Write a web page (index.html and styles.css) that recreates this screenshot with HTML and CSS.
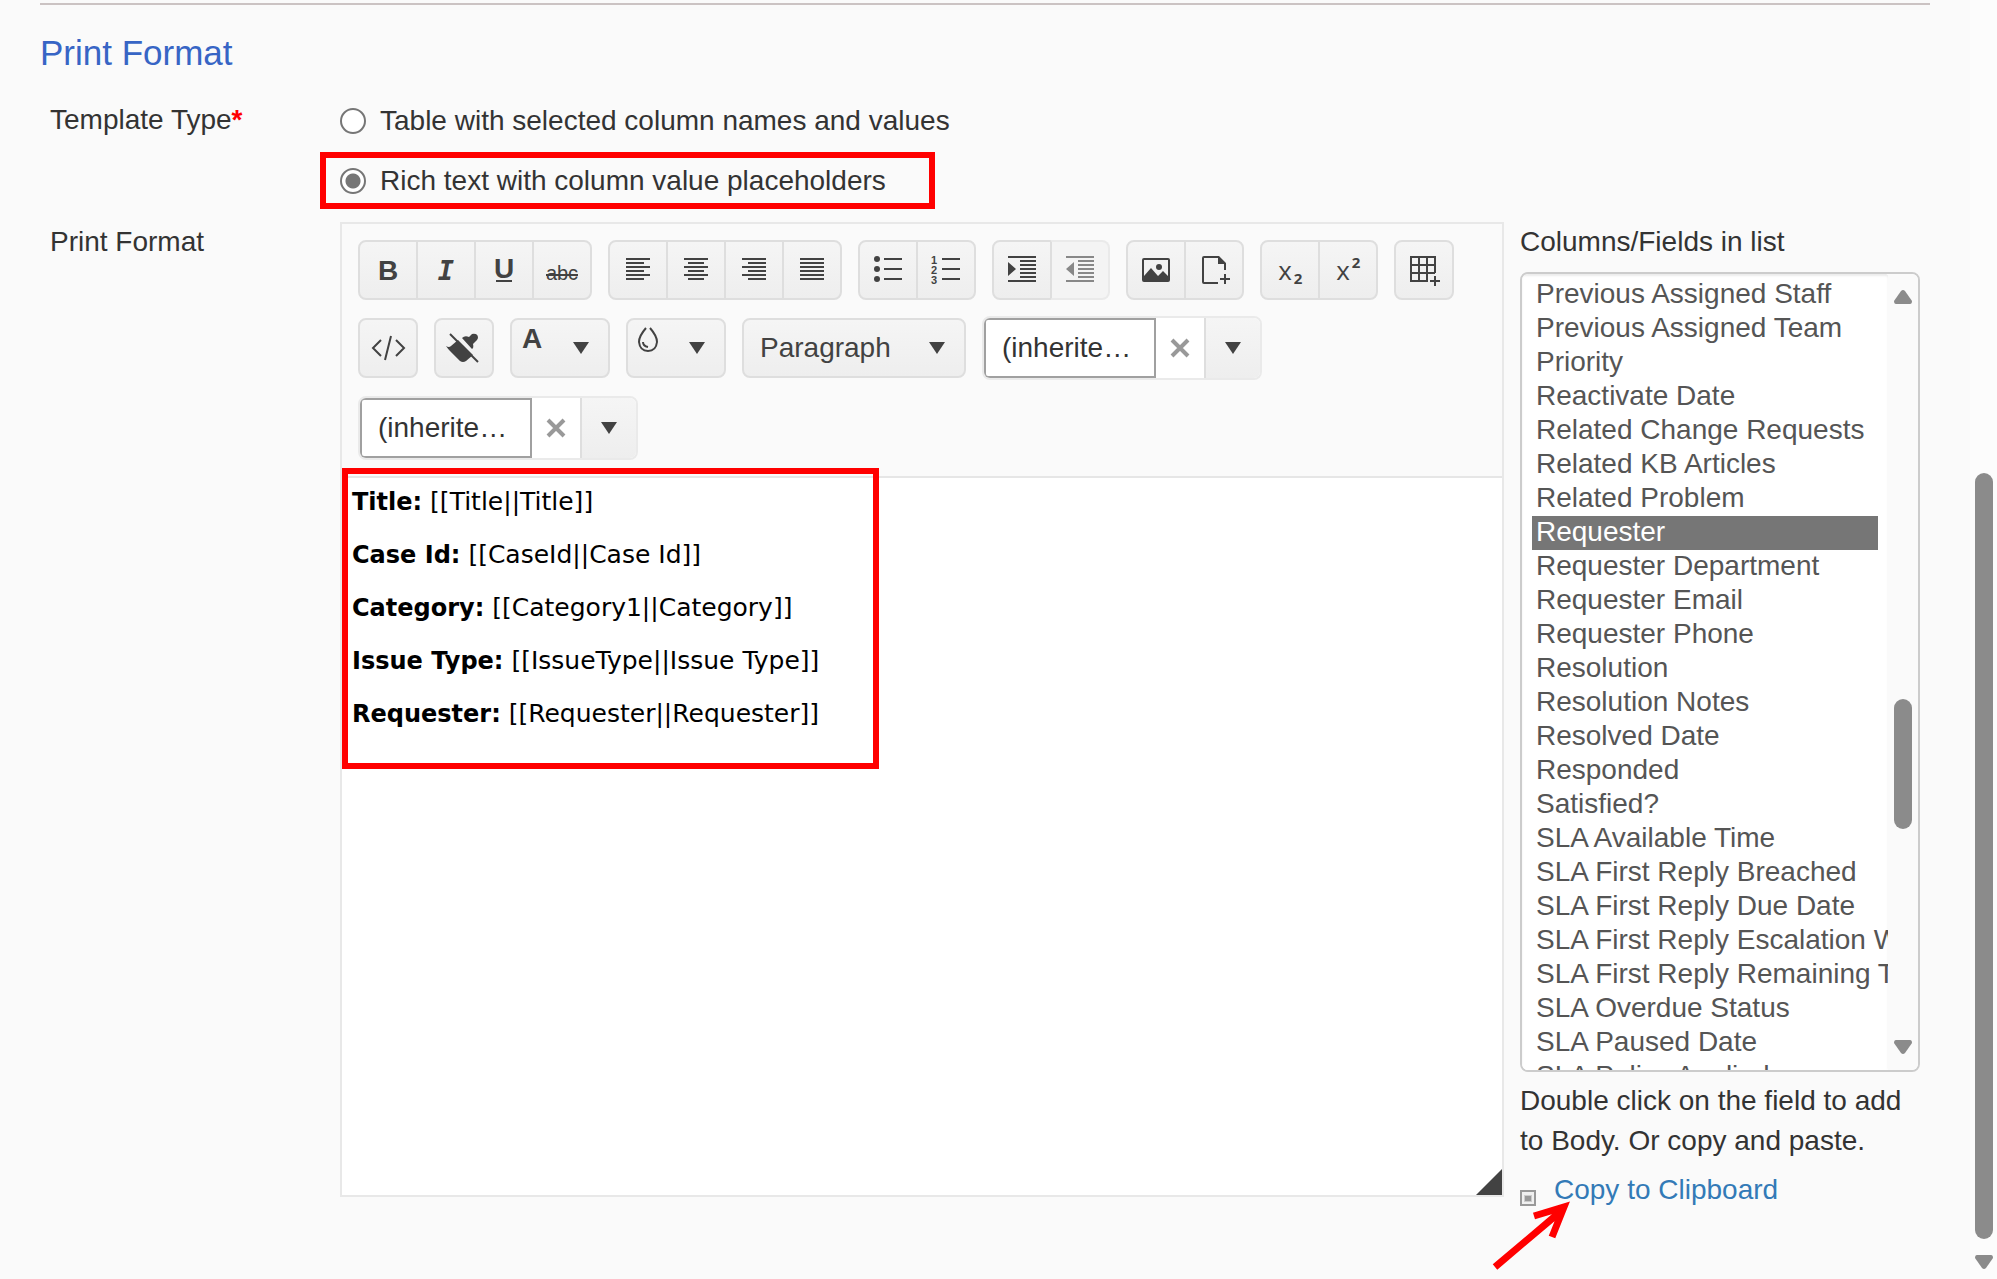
FILE: index.html
```html
<!DOCTYPE html>
<html lang="en">
<head>
<meta charset="utf-8">
<title>Print Format</title>
<link rel="stylesheet" href="styles.css">
</head>
<body>
<div class="page">
<main class="main">
  <hr class="divider">
  <h2 class="heading">Print Format</h2>
  <form class="form">
    <div class="row" role="radiogroup" aria-labelledby="type-label">
      <div class="label" id="type-label">Template Type<span class="required">*</span></div>
      <div class="options">
        <label class="option"><input type="radio" name="type">Table with selected column names and values</label>
        <label class="option marked"><input type="radio" name="type" checked>Rich text with column value placeholders</label>
      </div>
    </div>
    <div class="row">
      <div class="label" id="format-label">Print Format</div>
      <section class="editor" aria-labelledby="format-label">
        <div class="toolbar" role="toolbar" aria-label="Formatting">
          <div class="group">
            <button type="button" class="tool" aria-label="Bold"><svg viewBox="2 2 56 56"><text class="glyph-bold" x="30" y="40">B</text></svg></button>
            <button type="button" class="tool" aria-label="Italic"><svg viewBox="2 2 56 56"><text class="glyph-italic" x="30" y="40">I</text></svg></button>
            <button type="button" class="tool" aria-label="Underline"><svg viewBox="2 2 56 56"><text class="glyph-bold" x="30" y="38">U</text><path d="M22 40h16v2H22z"/></svg></button>
            <button type="button" class="tool" aria-label="Strikethrough"><svg viewBox="2 2 56 56"><text class="glyph-strike" x="30" y="40">abc</text><path d="M14 34h32v2H14z"/></svg></button>
          </div>
          <div class="group">
            <button type="button" class="tool" aria-label="Align left"><svg viewBox="2 2 56 56"><path d="M18 18h24v2H18zM18 22h18v2H18zM18 26h24v2H18zM18 30h18v2H18zM18 34h24v2H18zM18 38h18v2H18z"/></svg></button>
            <button type="button" class="tool" aria-label="Align center"><svg viewBox="2 2 56 56"><path d="M18 18h24v2H18zM22 22h16v2H22zM18 26h24v2H18zM22 30h16v2H22zM18 34h24v2H18zM22 38h16v2H22z"/></svg></button>
            <button type="button" class="tool" aria-label="Align right"><svg viewBox="2 2 56 56"><path d="M18 18h24v2H18zM24 22h18v2H24zM18 26h24v2H18zM24 30h18v2H24zM18 34h24v2H18zM24 38h18v2H24z"/></svg></button>
            <button type="button" class="tool" aria-label="Justify"><svg viewBox="2 2 56 56"><path d="M18 18h24v2H18zM18 22h24v2H18zM18 26h24v2H18zM18 30h24v2H18zM18 34h24v2H18zM18 38h24v2H18z"/></svg></button>
          </div>
          <div class="group">
            <button type="button" class="tool" aria-label="Bulleted list"><svg viewBox="2 2 56 56"><circle cx="19" cy="19" r="3"/><circle cx="19" cy="29" r="3"/><circle cx="19" cy="39" r="3"/><path d="M26 18h18v2H26zM26 28h18v2H26zM26 38h18v2H26z"/></svg></button>
            <button type="button" class="tool" aria-label="Numbered list"><svg viewBox="2 2 56 56"><text class="glyph-num" x="18" y="24">1</text><text class="glyph-num" x="18" y="34">2</text><text class="glyph-num" x="18" y="44">3</text><path d="M26 18h18v2H26zM26 28h18v2H26zM26 38h18v2H26z"/></svg></button>
          </div>
          <div class="group">
            <button type="button" class="tool" aria-label="Indent"><svg viewBox="2 2 56 56"><path d="M16 16h28v2H16zM28 20h16v2H28zM28 24h16v2H28zM28 28h16v2H28zM28 32h16v2H28zM28 36h16v2H28zM16 40h28v2H16zM16 22l8 7-8 7z"/></svg></button>
            <button type="button" class="tool" aria-label="Outdent" disabled><svg viewBox="2 2 56 56"><path d="M16 16h28v2H16zM28 20h16v2H28zM28 24h16v2H28zM28 28h16v2H28zM28 32h16v2H28zM28 36h16v2H28zM16 40h28v2H16zM24 22l-8 7 8 7z"/></svg></button>
          </div>
          <div class="group">
            <button type="button" class="tool" aria-label="Insert image"><svg viewBox="2 2 56 56"><path fill-rule="evenodd" d="M18 18h24q2 0 2 2v20q0 2-2 2H18q-2 0-2-2V20q0-2 2-2zM18 20v16l7-8 7 8 5-5 5 5V20z"/><circle cx="33" cy="27" r="3"/></svg></button>
            <button type="button" class="tool" aria-label="Insert file"><svg viewBox="2 2 56 56"><path d="M20 16h15l7 7v7h-2v-6h-6v-6H20v24h14v2H20q-2 0-2-2V18q0-2 2-2zM40 34h2v4h4v2h-4v4h-2v-4h-4v-2h4z"/></svg></button>
          </div>
          <div class="group">
            <button type="button" class="tool" aria-label="Subscript"><svg viewBox="2 2 56 56"><text class="glyph-x" x="25" y="40">x</text><text class="glyph-script" x="38" y="44">2</text></svg></button>
            <button type="button" class="tool" aria-label="Superscript"><svg viewBox="2 2 56 56"><text class="glyph-x" x="25" y="40">x</text><text class="glyph-script" x="38" y="28">2</text></svg></button>
          </div>
          <div class="group">
            <button type="button" class="tool" aria-label="Create table"><svg viewBox="2 2 56 56"><path class="line" d="M34 41H17V17h24v16M17 25h24M17 33h24M25 17v24M33 17v24M36 41h10M41 36v10"/></svg></button>
          </div>
          <button type="button" class="tool" aria-label="View HTML"><svg viewBox="2 2 56 56"><path class="line" d="M23 22l-8 8 8 8M38 22l8 8-8 8M33 18l-6 24"/></svg></button>
          <button type="button" class="tool" aria-label="Clean formatting"><svg viewBox="2 2 56 56"><path class="line" d="M16 16l28 28"/><path d="M24 22L39 37l-7 6q-3 2-6 0L16 33q-2-2-4-5 3 2 5 0zM28 20q3-3 7-1l3-3q6-1 6 4l-1 2-4 4q1 4-1 5z"/></svg></button>
          <button type="button" class="tool wide" aria-label="Text color"><svg viewBox="2 2 96 56"><text class="glyph-bold" x="22" y="30">A</text><path d="M63 24h16l-8 12z"/></svg></button>
          <button type="button" class="tool wide" aria-label="Background color"><svg viewBox="2 2 96 56"><path class="line" d="M20 10q-7 8-7 14 1 9 9 9t9-9q0-6-7-14M17 24q0 4 5 5"/><path d="M63 24h16l-8 12z"/></svg></button>
          <div class="format">
            <select class="format-select" aria-label="Format"><option>Paragraph</option></select>
            <svg class="format-arrow" viewBox="0 0 16 12"><path d="M0 0h16l-8 12z"/></svg>
          </div>
          <div class="combo">
            <input class="combo-input" type="text" value="(inherite…" aria-label="Font name">
            <button type="button" class="combo-clear" aria-label="Clear font name"><svg viewBox="0 0 20 20"><path d="M2 2l16 16M18 2L2 18"/></svg></button>
            <button type="button" class="combo-open" aria-label="Show font names"><svg viewBox="0 0 16 12"><path d="M0 0h16l-8 12z"/></svg></button>
          </div>
          <div class="combo">
            <input class="combo-input" type="text" value="(inherite…" aria-label="Font size">
            <button type="button" class="combo-clear" aria-label="Clear font size"><svg viewBox="0 0 20 20"><path d="M2 2l16 16M18 2L2 18"/></svg></button>
            <button type="button" class="combo-open" aria-label="Show font sizes"><svg viewBox="0 0 16 12"><path d="M0 0h16l-8 12z"/></svg></button>
          </div>
        </div>
        <div class="content" contenteditable="true" role="textbox" aria-multiline="true" aria-labelledby="format-label">
          <p><strong>Title:</strong> [[Title||Title]]</p>
          <p><strong>Case Id:</strong> [[CaseId||Case Id]]</p>
          <p><strong>Category:</strong> [[Category1||Category]]</p>
          <p><strong>Issue Type:</strong> [[IssueType||Issue Type]]</p>
          <p><strong>Requester:</strong> [[Requester||Requester]]</p>
        </div>
        <div class="highlight"></div>
        <svg class="resizer" viewBox="0 0 26 26"><path d="M26 0v26H0z"/></svg>
      </section>
      <aside class="side">
        <label class="label" for="fields">Columns/Fields in list</label>
        <div class="listbox">
          <select class="fields" id="fields" size="23">
            <option>Previous Assigned Staff</option>
            <option>Previous Assigned Team</option>
            <option>Priority</option>
            <option>Reactivate Date</option>
            <option>Related Change Requests</option>
            <option>Related KB Articles</option>
            <option>Related Problem</option>
            <option selected>Requester</option>
            <option>Requester Department</option>
            <option>Requester Email</option>
            <option>Requester Phone</option>
            <option>Resolution</option>
            <option>Resolution Notes</option>
            <option>Resolved Date</option>
            <option>Responded</option>
            <option>Satisfied?</option>
            <option>SLA Available Time</option>
            <option>SLA First Reply Breached</option>
            <option>SLA First Reply Due Date</option>
            <option>SLA First Reply Escalation When</option>
            <option>SLA First Reply Remaining Time</option>
            <option>SLA Overdue Status</option>
            <option>SLA Paused Date</option>
            <option>SLA Policy Applied</option>
          </select>
          <div class="list-scroll" aria-hidden="true">
            <svg viewBox="0 0 18 14"><path d="M7 1q2-2 4 0l7 10q0 3-2 3H2q-2 0-2-3z"/></svg>
            <div class="list-track"><div class="thumb"></div></div>
            <svg viewBox="0 0 18 14"><path d="M7 13q2 2 4 0l7-10q0-3-2-3H2Q0 0 0 3z"/></svg>
          </div>
        </div>
        <p class="hint">Double click on the field to add to Body. Or copy and paste.</p>
        <div class="copy">
          <svg class="copy-icon" viewBox="0 0 16 16"><path fill="#999" d="M0 0h16v16H0z"/><path fill="#f0f0f0" d="M2 2h12v12H2z"/><path fill="#ccc" d="M4 5h8v7H4z"/><path fill="#999" d="M5 6h6v5H5z"/></svg>
          <a class="copy-link" href="#copy">Copy to Clipboard</a>
          <svg class="arrow" viewBox="0 0 80 72"><path d="M5 66L70 11M44 15l30-9-12 30" /></svg>
        </div>
      </aside>
    </div>
  </form>
</main>
<div class="page-scroll" aria-hidden="true">
  <div class="page-track"><div class="thumb"></div></div>
  <svg viewBox="0 0 18 14"><path d="M7 13q2 2 4 0l7-10q0-3-2-3H2Q0 0 0 3z"/></svg>
</div>
</div>
</body>
</html>
```
FILE: styles.css
```css
* { box-sizing: border-box; }
body {
  margin: 0;
  background: #fafafa;
  color: #333;
  font: 28px/40px "Liberation Sans", Arial, sans-serif;
}
button, input, select { font: inherit; color: inherit; margin: 0; }
svg { display: block; }

.page { display: flex; min-height: 100vh; }
.main { flex: 1; min-width: 0; padding: 3px 40px 0; }
.divider { margin: 0; border: 0; border-top: 2px solid #cbc3c3; }
.heading { margin: 28px 0 27px; color: #3765c5; font-size: 35px; font-weight: 400; line-height: 40px; }
.form { display: grid; gap: 21px; padding: 0 10px; }
.row { display: flex; align-items: flex-start; }
.label { display: block; flex: 0 0 290px; }
.required { color: #f00; font-weight: 700; }

.options { display: grid; gap: 20px; padding-top: 1px; }
.option { position: relative; display: flex; align-items: center; gap: 14px; justify-self: start; }
.option input {
  appearance: none;
  width: 26px;
  height: 26px;
  border: 2px solid #767676;
  border-radius: 50%;
  background: #fff;
}
.option input:checked { background: radial-gradient(circle, #767676 7px, #fff 8px); }
.marked::after {
  content: "";
  position: absolute;
  inset: -9px -49px -8px -20px;
  border: 6px solid #f00;
}

.editor { position: relative; flex: 1; min-width: 0; border: 2px solid #e8e8e8; background: #fff; }
.toolbar {
  display: flex;
  flex-wrap: wrap;
  align-items: center;
  gap: 16px;
  padding: 16px;
  border-bottom: 2px solid #e6e6e6;
  background: #fafafa;
}
.group { display: flex; }
.tool {
  width: 60px;
  height: 60px;
  padding: 0;
  border: 2px solid #dedede;
  border-radius: 8px;
  background: linear-gradient(#f5f5f5, #eee);
}
.group .tool { border-radius: 0; }
.group .tool + .tool { margin-left: -2px; }
.group .tool:first-child { border-top-left-radius: 8px; border-bottom-left-radius: 8px; }
.group .tool:last-child { border-top-right-radius: 8px; border-bottom-right-radius: 8px; }
.tool:disabled { border-color: #eaeaea #eaeaea #eaeaea #dedede; background: #f4f4f4; }
.tool:disabled svg { opacity: .6; }
.tool svg { width: 100%; height: 56px; fill: #424242; }
.tool .line { fill: none; stroke: #424242; stroke-width: 2; }
.tool.wide { width: 100px; }
.tool text { text-anchor: middle; }
.glyph-bold { font: bold 28px "Liberation Sans", Arial, sans-serif; }
.glyph-italic { font: italic bold 27px "DejaVu Sans Mono", monospace; }
.glyph-strike { font: 20px "Liberation Sans", Arial, sans-serif; }
.glyph-num { font: bold 11px "Liberation Sans", Arial, sans-serif; }
.glyph-x { font: 26px "Open Sans", sans-serif; }
.glyph-script { font: bold 15px "Open Sans", sans-serif; }

.format { position: relative; width: 224px; color: #424242; }
.format-select {
  display: block;
  appearance: none;
  width: 100%;
  height: 60px;
  padding: 0 16px;
  border: 2px solid #dedede;
  border-radius: 8px;
  background: linear-gradient(#f5f5f5, #eee);
}
.format-arrow { position: absolute; top: 24px; right: 21px; width: 16px; height: 12px; fill: #424242; pointer-events: none; }

.combo {
  display: flex;
  width: 280px;
  height: 64px;
  border: 2px solid #eaeaea;
  border-radius: 8px;
  background: #fff;
  overflow: hidden;
}
.combo-input { flex: 1; min-width: 0; padding: 0 16px; border: 2px solid #a0a0a0; border-radius: 4px 0 0 4px; background: #fff; }
.combo-clear { display: grid; place-items: center; width: 48px; padding: 0; border: 0; background: #fff; }
.combo-clear svg { width: 20px; height: 20px; stroke: #999; stroke-width: 4; }
.combo-open { display: grid; place-items: center; width: 56px; padding: 0; border: 0; border-left: 2px solid #dedede; background: linear-gradient(#f5f5f5, #eee); }
.combo-open svg { width: 16px; height: 12px; fill: #424242; }

.content {
  min-height: 717px;
  padding: 9px 10px;
  color: #000;
  font: 25px/29px "DejaVu Sans", Verdana, sans-serif;
}
.content p { margin: 0 0 24px; }
.content strong { font-size: 24px; line-height: 1; }
.highlight { position: absolute; top: 244px; left: 0; width: 537px; height: 301px; border: 6px solid #f00; pointer-events: none; }
.resizer { position: absolute; right: 0; bottom: 0; width: 26px; height: 26px; fill: #424242; }

.side { flex: 0 0 400px; min-width: 0; margin-left: 16px; }
.listbox {
  display: flex;
  height: 800px;
  margin-top: 10px;
  border: 2px solid #ccc;
  border-radius: 8px;
  background: #fff;
  overflow: hidden;
}
.fields {
  flex: 1;
  min-width: 0;
  height: 100%;
  padding: 4px 10px 0;
  border: 0;
  outline: 0;
  background: #fff;
  box-shadow: inset 0 2px 2px rgba(0, 0, 0, .08);
  color: #555;
  scrollbar-width: none;
}
.fields option { height: 34px; padding: 0 4px; line-height: 30px; }
.fields option:checked { background: linear-gradient(#767676, #767676); -webkit-text-fill-color: #fff; }
.list-scroll { display: flex; flex: 0 0 30px; flex-direction: column; align-items: center; padding: 16px 0; background: #fafafa; }
.list-scroll svg, .page-scroll svg { width: 18px; height: 14px; fill: #8b8b8b; }
.list-track { display: flex; flex: 1; flex-direction: column; }
.list-track::before { content: ""; flex: 395; }
.list-track::after { content: ""; flex: 211; }
.list-track .thumb { flex: 130; }
.thumb { width: 18px; border-radius: 9px; background: #8b8b8b; }

.hint { margin: 9px 0; line-height: 40px; }
.copy { position: relative; display: flex; align-items: flex-end; gap: 18px; line-height: 40px; }
.copy-icon { width: 16px; height: 16px; margin-bottom: 4px; }
.copy-link { color: #337ab7; text-decoration: none; }
.arrow { position: absolute; top: 31px; left: -30px; width: 80px; height: 72px; fill: none; stroke: #f00; stroke-width: 7; }

.page-scroll {
  display: flex;
  flex-direction: column;
  align-items: center;
  width: 27px;
  padding-bottom: 10px;
  background: #fcfcfc;
}
.page-track { display: flex; flex: 1; flex-direction: column; margin-bottom: 16px; }
.page-track::before { content: ""; flex: 473; }
.page-track .thumb { flex: 767; }
```
